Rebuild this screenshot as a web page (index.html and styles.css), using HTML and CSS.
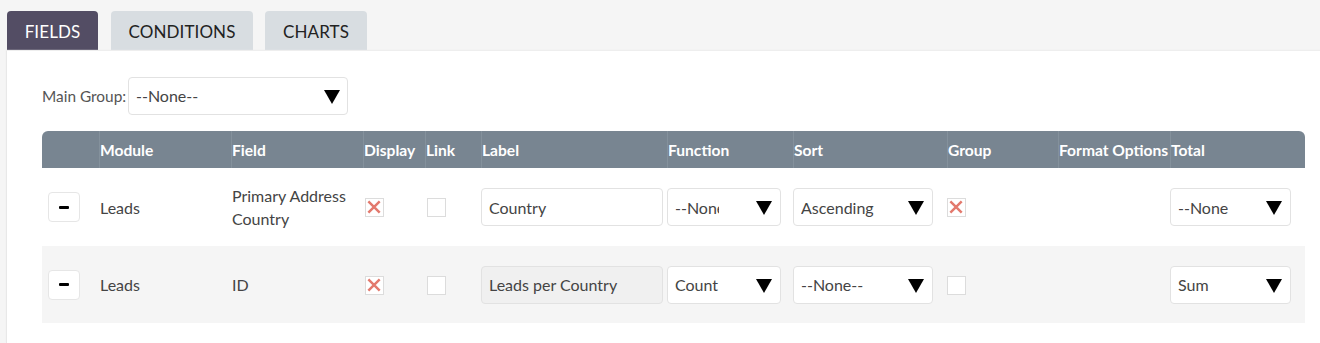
FILE: index.html
```html
<!DOCTYPE html>
<html>
<head>
<meta charset="utf-8">
<link rel="stylesheet" href="styles.css">
</head>
<body>
<div class="tabs">
  <div class="tab active t-fields">FIELDS</div>
  <div class="tab t-cond">CONDITIONS</div>
  <div class="tab t-charts">CHARTS</div>
</div>
<div class="panel">
  <div class="main-group">
    <span class="mg-label">Main Group:</span>
    <div class="select mg-select"><span class="sel-text">--None--</span><svg class="arrow" viewBox="0 0 16 14"><polygon points="0,0 16,0 8,14"/></svg></div>
  </div>
  <table class="fields">
    <colgroup>
      <col class="c0"><col class="c1"><col class="c2"><col class="c3"><col class="c4"><col class="c5"><col class="c6"><col class="c7"><col class="c8"><col class="c9"><col class="c10">
    </colgroup>
    <thead>
      <tr>
        <th></th><th>Module</th><th>Field</th><th>Display</th><th>Link</th><th>Label</th><th>Function</th><th>Sort</th><th>Group</th><th>Format Options</th><th>Total</th>
      </tr>
    </thead>
    <tbody>
      <tr>
        <td><div class="minus"><span></span></div></td>
        <td>Leads</td>
        <td>Primary Address Country</td>
        <td><span class="check checked"><svg viewBox="0 0 18 18"><path d="M2.5 2.5 L14.5 14.5 M14.5 2.5 L2.5 14.5"/></svg></span></td>
        <td><span class="check"></span></td>
        <td><div class="input">Country</div></td>
        <td><div class="select fn"><span class="sel-text">--None--</span><svg class="arrow" viewBox="0 0 16 14"><polygon points="0,0 16,0 8,14"/></svg></div></td>
        <td><div class="select sort"><span class="sel-text">Ascending</span><svg class="arrow" viewBox="0 0 16 14"><polygon points="0,0 16,0 8,14"/></svg></div></td>
        <td><span class="check checked"><svg viewBox="0 0 18 18"><path d="M2.5 2.5 L14.5 14.5 M14.5 2.5 L2.5 14.5"/></svg></span></td>
        <td></td>
        <td><div class="select total"><span class="sel-text">--None--</span><svg class="arrow" viewBox="0 0 16 14"><polygon points="0,0 16,0 8,14"/></svg></div></td>
      </tr>
      <tr class="alt">
        <td><div class="minus"><span></span></div></td>
        <td>Leads</td>
        <td>ID</td>
        <td><span class="check checked"><svg viewBox="0 0 18 18"><path d="M2.5 2.5 L14.5 14.5 M14.5 2.5 L2.5 14.5"/></svg></span></td>
        <td><span class="check"></span></td>
        <td><div class="input disabled">Leads per Country</div></td>
        <td><div class="select fn"><span class="sel-text">Count</span><svg class="arrow" viewBox="0 0 16 14"><polygon points="0,0 16,0 8,14"/></svg></div></td>
        <td><div class="select sort"><span class="sel-text">--None--</span><svg class="arrow" viewBox="0 0 16 14"><polygon points="0,0 16,0 8,14"/></svg></div></td>
        <td><span class="check"></span></td>
        <td></td>
        <td><div class="select total"><span class="sel-text">Sum</span><svg class="arrow" viewBox="0 0 16 14"><polygon points="0,0 16,0 8,14"/></svg></div></td>
      </tr>
    </tbody>
  </table>
</div>
</body>
</html>
```
FILE: styles.css
```css
* { box-sizing: border-box; }
html, body { height: 100%; }
body {
  margin: 0;
  background: #f5f5f5;
  font-family: Lato, "Open Sans", sans-serif;
  color: #333;
  display: flex;
  flex-direction: column;
  overflow: hidden;
}
.tabs {
  display: flex;
  gap: 12px;
  padding: 11px 0 0 7px;
  height: 51px;
}
.tab {
  height: 40px;
  display: flex;
  align-items: center;
  justify-content: center;
  font-size: 17px;
  letter-spacing: 0.1px;
  color: #222;
  background: #d8dde1;
  border-radius: 4px 4px 0 0;
  padding-top: 1px;
}
.t-fields { width: 91px; margin-right: 1px; }
.t-cond { width: 142px; }
.t-charts { width: 102px; }
.tab.active {
  background: #534d64;
  color: #fff;
}
.panel {
  flex: 1;
  margin-left: 6px;
  background: #fff;
  border-left: 1px solid #e8e8e8;
  box-shadow: 0 -1px 1px #eeeeee;
  padding: 26px 15px 0 35px;
}
.main-group {
  display: flex;
  align-items: center;
  height: 37px;
}
.mg-label {
  font-size: 15.4px;
  color: #555;
  width: 86px;
}
.select {
  position: relative;
  height: 38px;
  background: #fff;
  border: 1px solid #e2e2e2;
  border-radius: 4px;
  display: flex;
  align-items: center;
  padding-left: 7px;
  font-size: 16px;
  color: #444;
}
.sel-text {
  white-space: nowrap;
  overflow: hidden;
}
.arrow {
  position: absolute;
  right: 8px;
  top: 12px;
  width: 16px;
  height: 14px;
  fill: #000;
}
.mg-select { width: 220px; }
.mg-select .arrow { right: 7px; }
.fn { width: 114px; }
.fn .sel-text { width: 44px; }
.sort { width: 140px; }
.total { width: 121px; }
.total .sel-text { width: 50px; }

table.fields {
  margin-top: 17px;
  width: 1263px;
  border-collapse: separate;
  border-spacing: 0;
  table-layout: fixed;
}
col.c0 { width: 57px; }
col.c1 { width: 132px; }
col.c2 { width: 132px; }
col.c3 { width: 62px; }
col.c4 { width: 56px; }
col.c5 { width: 186px; }
col.c6 { width: 126px; }
col.c7 { width: 154px; }
col.c8 { width: 111px; }
col.c9 { width: 112px; }
col.c10 { width: 135px; }
thead th {
  background: #788591;
  color: #fff;
  font-weight: 700;
  font-size: 15.6px;
  text-align: left;
  height: 37px;
  padding: 0;
  border-left: 1px solid #84919c;
  white-space: nowrap;
  overflow: visible;
}
thead th:first-child { border-left: none; border-top-left-radius: 6px; }
thead th:last-child { border-top-right-radius: 6px; }
tbody td {
  height: 77px;
  padding: 0;
  font-size: 16px;
  color: #444;
  line-height: 23px;
  vertical-align: middle;
}
tbody td:nth-child(2), tbody td:nth-child(3) { padding-left: 1px; }
tbody td:nth-child(4), tbody td:nth-child(5) { padding-left: 2px; }
tbody td:first-child { padding-left: 6px; }
tbody tr.alt td { background: #f5f5f5; }
tbody tr:first-child td { height: 78px; }
.minus {
  width: 32px;
  height: 30px;
  border: 1px solid #e6e6e6;
  border-radius: 4px;
  background: #fff;
  display: flex;
  align-items: center;
  justify-content: center;
}
.minus span {
  width: 10px;
  height: 3px;
  background: #000;
  border-radius: 1px;
}
.check {
  display: block;
  width: 19px;
  height: 19px;
  border: 1px solid #dcdcdc;
  background: #fff;
  margin-top: 1px;
}
.check svg { display: block; width: 17px; height: 17px; }
.check svg path {
  stroke: #e3796d;
  stroke-width: 2.6;
  fill: none;
}
.input {
  width: 182px;
  height: 38px;
  border: 1px solid #e2e2e2;
  border-radius: 4px;
  background: #fff;
  display: flex;
  align-items: center;
  padding-left: 7px;
  font-size: 16px;
  color: #444;
}
.input.disabled { background: #f0f0f0; }
```
